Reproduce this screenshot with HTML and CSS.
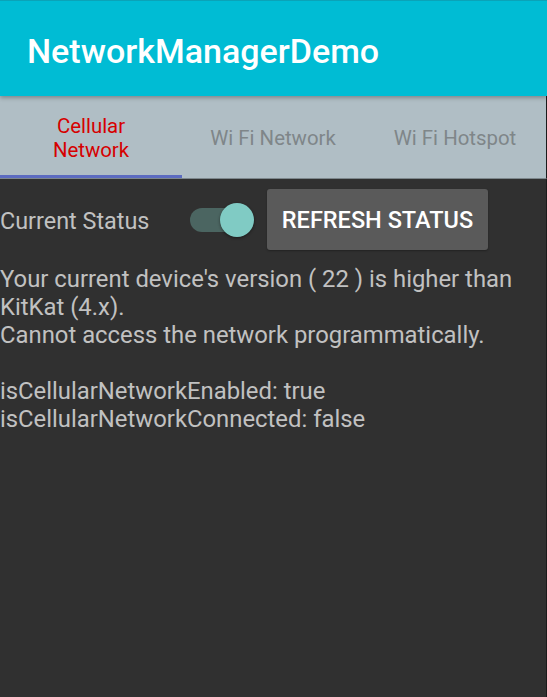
FILE: index.html
```html
<!DOCTYPE html>
<html>
<head>
<meta charset="utf-8">
<link rel="stylesheet" href="styles.css">
</head>
<body>
<div class="screen">
  <header class="appbar">
    <h1 class="title">NetworkManagerDemo</h1>
  </header>
  <nav class="tabs">
    <div class="tab active"><span>Cellular<br>Network</span></div>
    <div class="tab"><span>Wi Fi Network</span></div>
    <div class="tab"><span>Wi Fi Hotspot</span></div>
  </nav>
  <main class="content">
    <div class="status-row">
      <span class="label">Current Status</span>
      <span class="switch"><span class="track"></span><span class="thumb"></span></span>
      <button class="btn">REFRESH STATUS</button>
    </div>
    <p class="info">Your current device's version ( 22 ) is higher than<br>KitKat (4.x).<br>Cannot access the network programmatically.<br><br>isCellularNetworkEnabled: true<br>isCellularNetworkConnected: false</p>
  </main>
</div>
</body>
</html>
```
FILE: styles.css
```css
html, body {
  margin: 0;
  padding: 0;
  background: #303030;
}
body {
  font-family: Roboto, "Noto Sans", sans-serif;
  width: 547px;
  height: 697px;
  overflow: hidden;
}
.screen {
  display: flex;
  flex-direction: column;
  height: 697px;
}
.appbar {
  height: 95px;
  border-top: 1px solid #0aa3b8;
  background: #00bcd4;
  display: flex;
  align-items: center;
  padding-left: 27px;
  position: relative;
  z-index: 2;
  box-shadow: 0 2px 4px rgba(0,0,0,0.28);
}
.title {
  margin: 0;
  padding-top: 4px;
  color: #ffffff;
  font-size: 34px;
  font-weight: 500;
  line-height: 40px;
}
.tabs {
  height: 82px;
  background: #b0bec5;
  border-bottom: 1px solid #7d878c;
  border-right: 1px solid #1a1a1a;
  display: flex;
}
.tab {
  flex: 1;
  display: flex;
  align-items: center;
  justify-content: center;
  text-align: center;
  font-size: 20.4px;
  line-height: 24px;
  color: #7f8689;
  box-sizing: border-box;
  padding-top: 1px;
}
.tab.active {
  color: #d60000;
  box-shadow: inset 0 -3px 0 #5c6bc0;
}
.content {
  flex: 1;
  background: #303030;
  border-right: 1px solid #1a1a1a;
}
.status-row {
  display: grid;
  grid-template-columns: 190px 77px 221px;
  align-items: center;
  margin-top: 10px;
  height: 61px;
}
.label {
  font-size: 23.4px;
  color: #c1c1c1;
  line-height: 28px;
  padding-top: 3px;
}
.switch {
  display: flex;
  align-items: center;
  width: 64px;
  height: 36px;
  position: relative;
}
.track {
  width: 58px;
  height: 24px;
  border-radius: 12px;
  background: #4b6561;
}
.thumb {
  position: absolute;
  left: 30px;
  top: 1px;
  width: 34px;
  height: 34px;
  border-radius: 50%;
  background: #80cbc4;
  box-shadow: 0 1px 3px rgba(0,0,0,0.45);
}
.btn {
  height: 61px;
  width: 221px;
  border: none;
  border-radius: 3px;
  background: #5a5a5a;
  color: #ffffff;
  font-family: Roboto, "Noto Sans", sans-serif;
  font-size: 23.5px;
  font-weight: 500;
  padding: 0;
  box-shadow: 0 1px 2px rgba(0,0,0,0.3);
}
.info {
  margin: 15px 0 0 0;
  font-size: 23.85px;
  line-height: 28px;
  color: #c1c1c1;
}
```
